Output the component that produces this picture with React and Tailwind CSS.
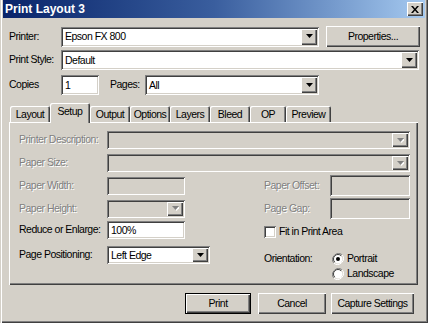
import React from 'react';

// Win2000-style bevels
const raised = 'shadow-[inset_1px_1px_0_#ffffff,inset_-1px_-1px_0_#404040,inset_-2px_-2px_0_#808080]';
const sunken = 'shadow-[inset_1px_1px_0_#808080,inset_-1px_-1px_0_#ffffff,inset_2px_2px_0_#404040,inset_-2px_-2px_0_#d4d0c8]';
const dim = 'text-[#808080] [text-shadow:1px_1px_0_#ffffff]';

function Arrow({ disabled }) {
  return (
    <div className={`w-[16px] h-full bg-[#d4d0c8] flex items-center justify-center ${raised}`}>
      <svg width="7" height="5" viewBox="0 0 7 5">
        {disabled && <path d="M1 1h7L4.5 5z" fill="#ffffff" />}
        <path d="M0 0h7L3.5 4z" fill={disabled ? '#808080' : '#000000'} />
      </svg>
    </div>
  );
}

function Combo({ value, disabled, className = '' }) {
  return (
    <div className={`flex items-stretch p-[2px] ${disabled ? 'bg-[#d4d0c8]' : 'bg-white'} ${sunken} ${className}`}>
      <div className="flex-1 flex items-center pl-[2px] leading-none overflow-hidden whitespace-nowrap">{value}</div>
      <Arrow disabled={disabled} />
    </div>
  );
}

function Field({ value, disabled, className = '' }) {
  return (
    <div className={`flex items-center px-[4px] leading-none ${disabled ? 'bg-[#d4d0c8]' : 'bg-white'} ${sunken} ${className}`}>
      {value}
    </div>
  );
}

function Btn({ children, isDefault, className = '' }) {
  return (
    <div className={`${isDefault ? 'border border-black' : ''} ${className}`}>
      <div className={`w-full h-full flex items-center justify-center bg-[#d4d0c8] leading-none ${raised}`}>
        {children}
      </div>
    </div>
  );
}

function Tab({ label, active, w }) {
  return (
    <div
      className={`${w} flex items-center justify-center bg-[#d4d0c8] rounded-t-[2px] leading-none shadow-[inset_1px_1px_0_#ffffff,inset_-1px_0_0_#404040,inset_-2px_0_0_#808080] ${
        active ? 'h-[20px] -mb-[1px] relative z-10 pb-[3px]' : 'h-[16px]'
      }`}
    >
      {label}
    </div>
  );
}

function Radio({ checked }) {
  return (
    <svg width="12" height="12" viewBox="0 0 12 12">
      <path d="M10.2 1.8A6 6 0 0 0 1.8 10.2" fill="none" stroke="#808080" strokeWidth="1" />
      <path d="M1.8 10.2A6 6 0 0 0 10.2 1.8" fill="none" stroke="#ffffff" strokeWidth="1" />
      <circle cx="6" cy="6" r="4.5" fill="#ffffff" />
      <path d="M9.2 2.8A4.5 4.5 0 0 0 2.8 9.2" fill="none" stroke="#404040" strokeWidth="1" />
      {checked && <circle cx="6" cy="6" r="2" fill="#000000" />}
    </svg>
  );
}

export default function App() {
  const tabs = [
    ['Layout', 'w-[40px]'],
    ['Setup', 'w-[40px]'],
    ['Output', 'w-[40px]'],
    ['Options', 'w-[40px]'],
    ['Layers', 'w-[40px]'],
    ['Bleed', 'w-[40px]'],
    ['OP', 'w-[36px]'],
    ['Preview', 'w-[45px]'],
  ];

  return (
    <div className="w-[428px] h-[323px] bg-[#d4d0c8] flex flex-col overflow-hidden whitespace-nowrap text-[10.5px] tracking-[-0.5px] text-black font-['Liberation_Sans',Arial,sans-serif] shadow-[inset_1px_0_0_#d4d0c8,inset_2px_0_0_#ffffff,inset_-1px_-1px_0_#404040,inset_-2px_-2px_0_#808080]">
      {/* Title bar */}
      <div className="mx-[3px] h-[18px] flex items-center justify-between pl-[2px] pr-[2px] bg-linear-to-r from-[#0a246a] via-[#3a5e9e] to-[#a6caf0]">
        <span className="text-white font-bold text-[12px] tracking-[0px]">Print Layout 3</span>
        <div className={`w-[16px] h-[14px] flex items-center justify-center bg-[#d4d0c8] ${raised}`}>
          <svg width="8" height="7" viewBox="0 0 8 7">
            <path d="M0 0h2l2 2.5L6 0h2L5 3.5 8 7H6L4 4.5 2 7H0l3-3.5z" fill="#000000" />
          </svg>
        </div>
      </div>

      {/* Printer */}
      <div className="flex items-center mt-[8px] pl-[9px] h-[21px]">
        <span className="w-[52px]">Printer:</span>
        <Combo className="w-[258px] h-[20px]" value="Epson FX 800" />
        <Btn className="ml-[7px] w-[94px] h-[21px]">Properties...</Btn>
      </div>

      {/* Print Style */}
      <div className="flex items-center mt-[3px] pl-[9px] h-[20px]">
        <span className="w-[52px]">Print Style:</span>
        <Combo className="w-[358px] h-[20px]" value="Default" />
      </div>

      {/* Copies / Pages */}
      <div className="flex items-center mt-[5px] pl-[9px] h-[20px]">
        <span className="w-[52px]">Copies</span>
        <Field className="w-[38px] h-[20px]" value="1" />
        <span className="ml-[11px] w-[35px]">Pages:</span>
        <Combo className="w-[174px] h-[20px]" value="All" />
      </div>

      {/* Tabs */}
      <div className="mt-[8px] ml-[10px] flex items-end h-[19px]">
        {tabs.map(([t, w]) => (
          <Tab key={t} label={t} w={w} active={t === 'Setup'} />
        ))}
      </div>

      {/* Setup panel */}
      <div className={`ml-[9px] w-[409px] h-[163px] pl-[10px] flex flex-col ${raised}`}>
        <div className="flex items-center mt-[9px] h-[18px]">
          <span className={`w-[88px] ${dim}`}>Printer Description:</span>
          <Combo disabled className="w-[303px] h-[18px]" value="" />
        </div>
        <div className="flex items-center mt-[5px] h-[18px]">
          <span className={`w-[88px] ${dim}`}>Paper Size:</span>
          <Combo disabled className="w-[303px] h-[18px]" value="" />
        </div>
        <div className="flex items-center mt-[3px] h-[21px]">
          <div className="w-[245px] flex items-center">
            <span className={`w-[88px] ${dim}`}>Paper Width:</span>
            <Field disabled className="w-[78px] h-[18px]" value="" />
          </div>
          <span className={`w-[66px] ${dim}`}>Paper Offset:</span>
          <Field disabled className="w-[80px] h-[21px]" value="" />
        </div>
        <div className="flex items-center mt-[2px] h-[21px]">
          <div className="w-[245px] flex items-center">
            <span className={`w-[88px] ${dim}`}>Paper Height:</span>
            <Combo disabled className="w-[78px] h-[18px]" value="" />
          </div>
          <span className={`w-[66px] ${dim}`}>Page Gap:</span>
          <Field disabled className="w-[80px] h-[21px]" value="" />
        </div>
        <div className="flex items-center mt-[2px] h-[18px]">
          <div className="w-[245px] flex items-center">
            <span className="w-[88px]">Reduce or Enlarge:</span>
            <Field className="w-[78px] h-[18px]" value="100%" />
          </div>
          <div className="flex items-center gap-[3px] pt-[4px]">
            <div className={`w-[12px] h-[12px] bg-white ${sunken}`} />
            <span>Fit in Print Area</span>
          </div>
        </div>
        <div className="flex items-start mt-[7px]">
          <div className="w-[245px] flex items-center h-[18px]">
            <span className="w-[88px]">Page Positioning:</span>
            <Combo className="w-[103px] h-[18px]" value="Left Edge" />
          </div>
          <div className="flex flex-col mt-[6px] gap-[1px]">
            <div className="flex items-center h-[14px]">
              <span className="w-[68px]">Orientation:</span>
              <Radio checked />
              <span className="ml-[3px]">Portrait</span>
            </div>
            <div className="flex items-center h-[14px] pl-[68px]">
              <Radio />
              <span className="ml-[3px]">Landscape</span>
            </div>
          </div>
        </div>
      </div>

      {/* Buttons */}
      <div className="flex justify-end mt-[8px] pr-[14px] h-[21px]">
        <Btn isDefault className="w-[66px] h-[21px]">Print</Btn>
        <Btn className="ml-[7px] w-[68px] h-[21px]">Cancel</Btn>
        <Btn className="ml-[5px] w-[83px] h-[21px]">Capture Settings</Btn>
      </div>
    </div>
  );
}
